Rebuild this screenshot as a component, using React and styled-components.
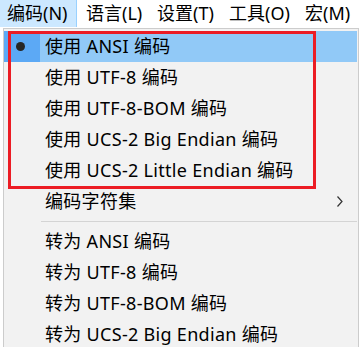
import React from 'react'
import styled, { createGlobalStyle } from 'styled-components'

const GlobalStyle = createGlobalStyle`
  html, body { margin: 0; padding: 0; background: #ffffff; }
  body {
    font-family: "Noto Sans", "Noto Sans CJK SC", sans-serif;
    font-size: 18px;
    color: #000;
  }
`

const Page = styled.div`
  position: relative;
  width: 361px;
  height: 347px;
  overflow: hidden;
  background: #ffffff;
`

const MenuBar = styled.div`
  display: flex;
  gap: 2px;
  height: 27px;
  background: #ffffff;
`

const BarItem = styled.div`
  width: ${p => p.$w}px;
  height: 27px;
  line-height: 26px;
  padding-left: 7px;
  box-sizing: border-box;
  white-space: nowrap;
  flex: none;
  background: ${p => (p.$open ? '#cce8ff' : 'transparent')};
  border-right: 1px solid ${p => (p.$open ? '#99d1ff' : 'transparent')};
`

const Dropdown = styled.div`
  position: absolute;
  left: 3px;
  top: 28px;
  width: 356px;
  padding-top: 2px;
  background: #f2f2f2;
  border: 1px solid #cccccc;
  box-sizing: border-box;
`

const Row = styled.div`
  display: flex;
  align-items: center;
  height: 31px;
  margin-right: 1px;
  background: ${p => (p.$hover ? '#91c9f7' : 'transparent')};
`

const Gutter = styled.div`
  width: 36px;
  height: 100%;
  flex: none;
  display: flex;
  align-items: center;
  justify-content: center;
  background: ${p => (p.$hover ? '#5ca9f5' : 'transparent')};
`

const Bullet = styled.span`
  width: 9px;
  height: 9px;
  border-radius: 50%;
  background: #262626;
  margin-right: 3px;
`

const Label = styled.span`
  flex: 1;
  padding-left: 5px;
  white-space: nowrap;
  line-height: 31px;
  letter-spacing: 0.3px;
`

const Chevron = styled.svg`
  width: 6px;
  height: 11px;
  margin-right: 14px;
  flex: none;
`

const Separator = styled.div`
  height: 1px;
  margin: 4px 1px 4px 37px;
  background: #d4d4d4;
`

const Annotation = styled.div`
  position: absolute;
  left: 8px;
  top: 31px;
  width: 308px;
  height: 158px;
  border: 3px solid #ec1c24;
  box-sizing: border-box;
  pointer-events: none;
`

const barItems = [
  { t: '编码(N)', w: 77 },
  { t: '语言(L)', w: 69 },
  { t: '设置(T)', w: 70 },
  { t: '工具(O)', w: 74 },
  { t: '宏(M)', w: 60 },
]

const useItems = [
  '使用 ANSI 编码',
  '使用 UTF-8 编码',
  '使用 UTF-8-BOM 编码',
  '使用 UCS-2 Big Endian 编码',
  '使用 UCS-2 Little Endian 编码',
]

const convertItems = [
  '转为 ANSI 编码',
  '转为 UTF-8 编码',
  '转为 UTF-8-BOM 编码',
  '转为 UCS-2 Big Endian 编码',
  '转为 UCS-2 Little Endian 编码',
]

export default function App() {
  return (
    <Page>
      <GlobalStyle />
      <MenuBar>
        {barItems.map((b, i) => (
          <BarItem key={b.t} $w={b.w} $open={i === 0}>{b.t}</BarItem>
        ))}
      </MenuBar>
      <Dropdown>
        {useItems.map((t, i) => (
          <Row key={t} $hover={i === 0}>
            <Gutter $hover={i === 0}>{i === 0 && <Bullet />}</Gutter>
            <Label>{t}</Label>
          </Row>
        ))}
        <Row>
          <Gutter />
          <Label>编码字符集</Label>
          <Chevron viewBox="0 0 6 11">
            <path d="M0.5 0.5 L5 5.5 L0.5 10.5" fill="none" stroke="#333" strokeWidth="1.2" />
          </Chevron>
        </Row>
        <Separator />
        {convertItems.map(t => (
          <Row key={t}>
            <Gutter />
            <Label>{t}</Label>
          </Row>
        ))}
      </Dropdown>
      <Annotation />
    </Page>
  )
}
